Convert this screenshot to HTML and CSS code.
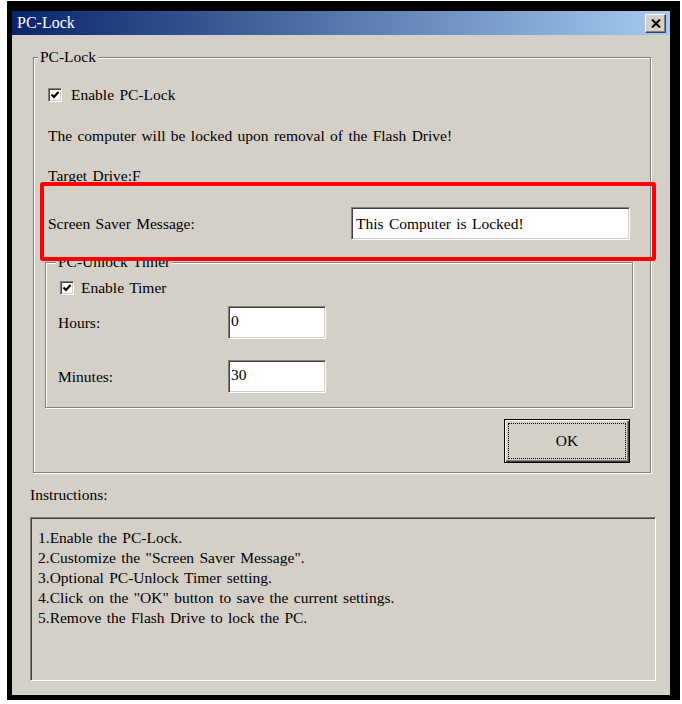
FILE: index.html
```html
<!DOCTYPE html>
<html>
<head>
<meta charset="utf-8">
<link rel="stylesheet" href="styles.css">
</head>
<body>
<div class="window">
  <div class="titlebar">
    <span class="title">PC-Lock</span>
    <span class="close"><svg width="10" height="9" viewBox="0 0 10 9"><path d="M1 0.5 L9 8.5 M9 0.5 L1 8.5" stroke="#000" stroke-width="2" fill="none"/></svg></span>
  </div>
  <div class="group outer">
    <div class="legend">PC-Lock</div>
    <div class="row r1"><span class="cb"><svg width="10" height="10" viewBox="0 0 10 10"><path d="M1.5 4.5 L4 7 L8.5 2" stroke="#000" stroke-width="2.2" fill="none"/></svg></span><span>Enable PC-Lock</span></div>
    <div class="row r2">The computer will be locked upon removal of the Flash Drive!</div>
    <div class="row r3">Target Drive:F</div>
    <div class="field r4"><span>Screen Saver Message:</span><span class="input wide">This Computer is Locked!</span></div>
    <div class="group inner">
      <div class="legend ilegend">PC-Unlock Timer</div>
      <div class="row t1"><span class="cb cb2"><svg width="10" height="10" viewBox="0 0 10 10"><path d="M1.5 4.5 L4 7 L8.5 2" stroke="#000" stroke-width="2.2" fill="none"/></svg></span><span>Enable Timer</span></div>
      <div class="field small t2"><span>Hours:</span><span class="input num">0</span></div>
      <div class="field small t3"><span>Minutes:</span><span class="input num">30</span></div>
    </div>
    <div class="btnrow"><div class="button"><span class="focus">OK</span></div></div>
  </div>
  <div class="instr-label">Instructions:</div>
  <div class="instr">
    <div>1.Enable the PC-Lock.</div>
    <div>2.Customize the "Screen Saver Message".</div>
    <div>3.Optional PC-Unlock Timer setting.</div>
    <div>4.Click on the "OK" button to save the current settings.</div>
    <div>5.Remove the Flash Drive to lock the PC.</div>
  </div>
  <div class="highlight"></div>
</div>
</body>
</html>
```
FILE: styles.css
```css
body {
  margin: 0;
  background: #fff;
  font-family: "Liberation Serif", serif;
  font-size: 15.5px;
  word-spacing: 1.5px;
  color: #000;
}
.window {
  position: relative;
  margin: 1px 0 0 7px;
  width: 658px;
  height: 684px;
  border-style: solid;
  border-color: #000;
  border-width: 10px 10px 5px 5px;
  background: #d4d0c8;
}
.titlebar {
  height: 24px;
  background: linear-gradient(to right, #0a246a, #a6caf0);
  display: flex;
  align-items: center;
  justify-content: space-between;
  padding: 0 4px 0 5px;
  color: #fff;
}
.title {
  font-size: 16px;
  line-height: 24px;
  word-spacing: 0;
}
.close {
  width: 21px;
  height: 19px;
  box-sizing: border-box;
  background: #d4d0c8;
  border: 1px solid;
  border-color: #fff #404040 #404040 #fff;
  box-shadow: inset -1px -1px 0 #808080;
  display: flex;
  align-items: center;
  justify-content: center;
}
.group {
  box-sizing: border-box;
  border: 1px solid #808080;
  box-shadow: 1px 1px 0 #fff, inset 1px 1px 0 #fff;
}
.outer {
  margin: 22px 0 0 21px;
  width: 618px;
  padding: 0 17px 9px 14px;
}
.legend {
  width: fit-content;
  margin: -10px 0 0 -10px;
  line-height: 18px;
  height: 18px;
  padding: 0 2px;
  background: #d4d0c8;
}
.row {
  display: flex;
  align-items: center;
  height: 18px;
  line-height: 18px;
}
.r1 { margin-top: 20px; }
.r2 { margin-top: 23px; }
.r3 { margin-top: 22px; }
.cb {
  width: 14px;
  height: 14px;
  box-sizing: border-box;
  background: #fff;
  border: 1px solid;
  border-color: #808080 #fff #fff #808080;
  box-shadow: inset 1px 1px 0 #404040, inset -1px -1px 0 #d4d0c8;
  display: flex;
  align-items: center;
  justify-content: center;
  margin-right: 9px;
}
.cb2 {
  margin-left: 2px;
  margin-right: 7px;
}
.field {
  display: grid;
  grid-template-columns: 303px 279px;
  align-items: center;
}
.r4 { margin-top: 22px; }
.input {
  box-sizing: border-box;
  height: 33px;
  background: #fff;
  border: 1px solid;
  border-color: #808080 #fff #fff #808080;
  box-shadow: inset 1px 1px 0 #404040, inset -1px -1px 0 #d4d0c8;
  padding: 0 4px;
  display: flex;
  align-items: center;
}
.num { padding: 0 2px 3px; }
.inner {
  margin: 22px 0 0 -3px;
  width: 588px;
  padding: 0 0 14px 12px;
}
.ilegend { margin-left: -2px; }
.t1 { margin-top: 8px; }
.small { grid-template-columns: 170px 98px; }
.t2 { margin-top: 9px; }
.t3 { margin-top: 21px; }
.btnrow {
  display: flex;
  justify-content: flex-end;
  padding-right: 3px;
  margin-top: 11px;
}
.button {
  width: 126px;
  height: 44px;
  box-sizing: border-box;
  border: 1px solid #000;
  background: #d4d0c8;
  box-shadow: inset 1px 1px 0 #fff, inset -1px -1px 0 #404040, inset -2px -2px 0 #808080;
  padding: 3px;
}
.focus {
  box-sizing: border-box;
  height: 100%;
  border: 1px dotted #000;
  display: flex;
  align-items: center;
  justify-content: center;
}
.instr-label {
  margin: 13px 0 0 18px;
  line-height: 18px;
}
.instr {
  margin: 13px 0 0 18px;
  width: 626px;
  height: 164px;
  box-sizing: border-box;
  border: 1px solid;
  border-color: #808080 #fff #fff #808080;
  box-shadow: inset 1px 1px 0 #404040, inset -1px -1px 0 #d4d0c8;
  padding: 10px 7px;
  line-height: 20px;
}
.highlight {
  position: absolute;
  left: 28px;
  top: 171px;
  width: 616px;
  height: 79px;
  box-sizing: border-box;
  border: 4px solid #f00;
  border-radius: 3px;
}
```
